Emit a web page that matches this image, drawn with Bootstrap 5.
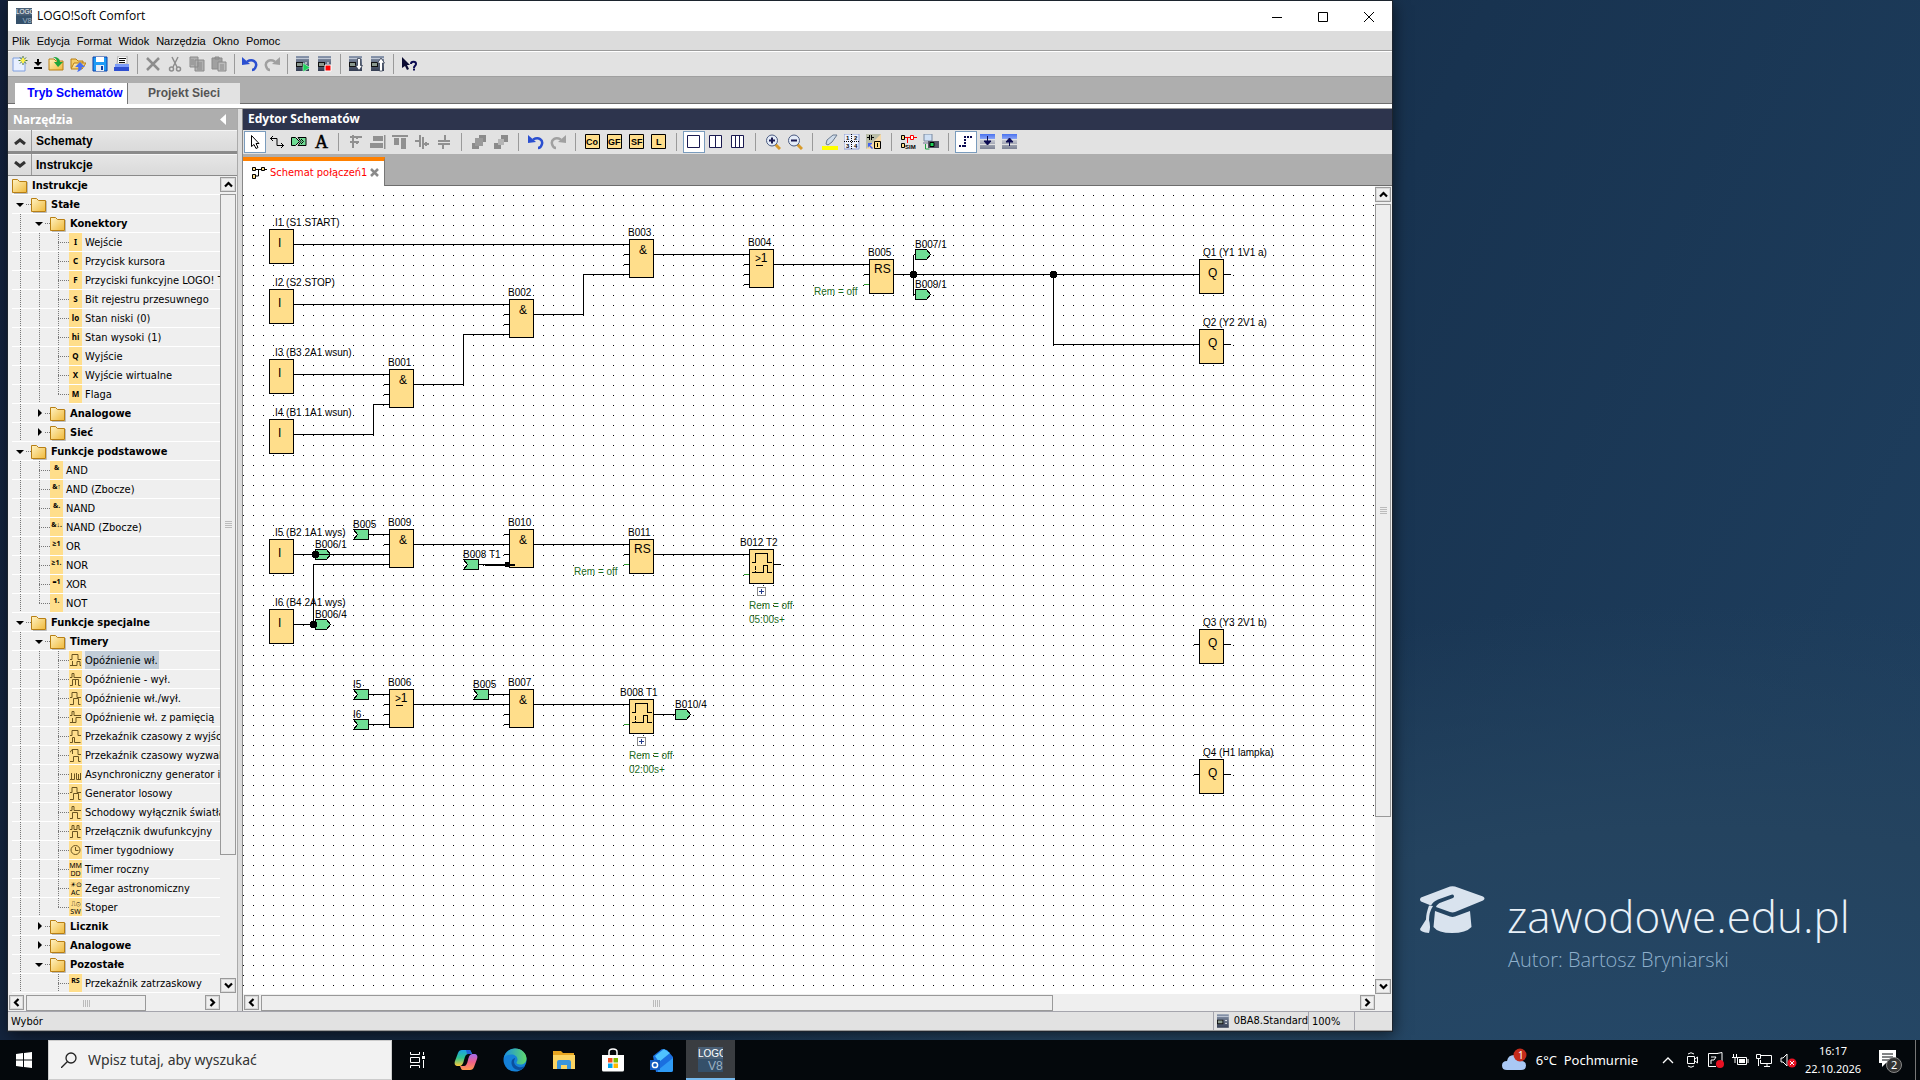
<!DOCTYPE html>
<html lang="pl">
<head>
<meta charset="utf-8">
<meta name="viewport" content="width=device-width, initial-scale=1">
<title>LOGO!Soft Comfort</title>
<link href="https://cdn.jsdelivr.net/npm/bootstrap@5.3.0/dist/css/bootstrap.min.css" rel="stylesheet">
<style>
:root{--ui:"DejaVu Sans Condensed","DejaVu Sans",sans-serif;--seg:"Noto Sans","Open Sans",sans-serif;--ari:"Liberation Sans",Arial,sans-serif}
body{font-family:var(--seg);font-size:11px;line-height:16px;color:#000;background:#1d3b59;overflow:hidden}
button{font:inherit;color:inherit}
.desktop{background:radial-gradient(ellipse 1100px 560px at 88% 112%,#25496a 0,#24435f 60%,transparent 100%),linear-gradient(115deg,#12203a 0,#14273f 35%,#183350 62%,#1f4060 100%)}
.app-win{width:calc(72.5% - 8px);margin:1px 0 9px 8px;background:#e2e2e2;box-shadow:0 0 0 1px #1c242e,2px 4px 14px rgba(0,0,0,.55)}
.title-bar{height:30px;background:#fff;padding-left:8px}
.title-bar h1{font:400 12px/16px "Open Sans","Noto Sans",sans-serif;margin:0 0 0 5px}
.win-btn{width:46px;height:30px;border:0;background:none;padding:0}
.menu-bar{height:21px;background:#dcdcdc;border-bottom:1px solid #fff;box-shadow:inset 0 -1px #9b9b9b;font-family:var(--ari);padding:2px 0 0 4px;gap:7px}
.menu-bar a{color:#000;text-decoration:none}
.tool-bar{height:25px;background:#e2e2e2;border-bottom:1px solid #a0a0a0;padding-left:1px}
.tb{width:22px;height:22px;padding:0;border:1px solid transparent;background:none;flex:none;display:flex;align-items:center;justify-content:center}
.tb.on{background:#fff;border-color:#7a9cbd}
.tb.thin{width:14px}
.tsep{width:9px;height:20px;flex:none;background:linear-gradient(#9a9a9a,#9a9a9a) center/1px 100% no-repeat}
.ed-tools .tsep{width:13px;height:18px}
.mode-bar{height:27px;background:#aeaeae;border-bottom:1px solid #6d6d6d;padding:6px 0 0 7px}
.mode-bar button{height:21px;border:0;padding:0 0 2px;font:bold 12px/18px var(--ari);width:112px;background:#e2e2e2;color:#555;text-align:center}
.mode-bar button.now{width:113px;background:#fff;color:#00f;border-right:1px solid #777;padding-left:8px}
.strip{height:5px;background:#fff;border-bottom:1px solid #999}
.side{width:229px;flex:none;background:#efefef}
.pane-head{height:21px;font:bold 12px/20px var(--seg);color:#fff;padding:0 5px;flex:none}
.side .pane-head{background:#aeaeae;padding-right:10px}
.acc{height:21px;border:0;background:linear-gradient(#e6e6e6,#dadada);font:bold 12px/22px var(--ari);padding:0;text-align:left;flex:none;box-shadow:inset 0 1px #f4f4f4}
.acc span.ch{width:24px;height:21px;border-right:1px solid #9a9a9a;display:flex;align-items:center;justify-content:center;margin-right:4px}
.acc.dark{height:24px;border-bottom:3px solid #8a8a8a}
.acc.line{border-bottom:1px solid #8a8a8a;height:22px}
.tree{margin:0 0 0 4px;padding:0;list-style:none;overflow:hidden;flex:1 1 0;min-width:0}
.tree li{display:flex;height:19px;border-bottom:1px solid #fff;line-height:20px;white-space:nowrap;overflow:hidden;font-family:var(--ui);font-size:11px}
.tree li.f{font-weight:700}
.tree i{width:19px;height:18px;flex:none;position:relative;font-style:normal}
.tree i.g{background:repeating-linear-gradient(#777 0 1px,transparent 1px 2px) 8px 0/1px 100% no-repeat}
.tree i.b,.tree i.e{background:repeating-linear-gradient(#777 0 1px,transparent 1px 2px) 8px 0/1px 100% no-repeat,repeating-linear-gradient(90deg,#777 0 1px,transparent 1px 2px) 8px 9px/11px 1px no-repeat}
.tree i.e{background-size:1px 9px,11px 1px}
.tree i.o,.tree i.c{background:repeating-linear-gradient(90deg,#777 0 1px,transparent 1px 2px) 14px 9px/5px 1px no-repeat}
.tree i.o::before{content:"";position:absolute;left:4px;top:8px;border:4px solid transparent;border-top-color:#000;border-bottom:0}
.tree i.c::before{content:"";position:absolute;left:7px;top:5px;border:4px solid transparent;border-left-color:#000;border-right:0}
.tree svg.fo{width:16px;height:16px;margin:2px 4px 0 0;flex:none}
.tree b{width:13px;height:18px;flex:none;background:#ffde8b;margin-right:3px;font:bold 8px/17px var(--seg);text-align:center;overflow:hidden}
.tree b.n{font-size:7px;line-height:13px}
.tree b.m{font:7px/8px var(--seg);padding-top:2px;white-space:normal}
.tree b svg{display:block;margin:3px 0 0 1px}
.tree mark{background:#c2cdd8;padding:0 1px 0 0;line-height:20px}
.sbv{width:17px;background:#efefef;flex:none;padding:1px 1px 0 0;gap:2px}
.sbh{height:17px;background:#efefef;flex:none;padding:1px 0 0 1px;gap:2px}
.sbtn{width:15px;height:15px;border:1px solid #999;background:#efefef;padding:0;flex:none;display:flex;align-items:center;justify-content:center;box-shadow:inset 0 0 0 1px #d9d9d9}
.sbv .sbtn{width:16px}
.thumb{border:1px solid #999;background:#eee;display:flex;align-items:center;justify-content:center}
.sbv .thumb{width:16px}
.sbh .thumb{height:16px}
.grip-h{width:7px;height:7px;background:repeating-linear-gradient(90deg,#bbb 0 1px,transparent 1px 2px)}
.grip-v{width:7px;height:7px;background:repeating-linear-gradient(#bbb 0 1px,transparent 1px 2px)}
.split{width:6px;background:#dcdcdc;border-left:1px solid #aaa;border-right:1px solid #888;flex:none}
.ed .pane-head{background:#2d344d}
.ed-tools{height:24px;background:#e2e2e2;padding-left:1px;flex:none}
.doc-bar{height:32px;background:#aeaeae;border-bottom:1px solid #6d6d6d;padding-top:3px;flex:none}
.doc-tab{height:29px;width:142px;background:#fff;border-top:4px solid #ff8000;border-right:1px solid #777;color:#f00;font-family:var(--ui);padding:0 0 2px 8px;gap:3px}
.doc-tab button{border:0;background:none;padding:0;line-height:0}
.canvas{background:#fff;min-width:0;flex:1 1 0}
.canvas text{font-family:var(--ari)}
.t10{font-size:10px}.t12{font-size:12px}
.status{height:20px;background:#e2e2e2;border-top:1px solid #a5a5ad;font-family:var(--ui);line-height:20px;flex:none;border-bottom:1px solid #999}
.status>div{border-left:1px solid #a5a5ad;padding-left:3px}
.st1{width:95px}.st2{width:46px}.st3{width:38px}
.brand{color:#e9f1f8;padding:0 0 66px 28px;gap:22px}
.brand h2{font:300 44px/52px "Open Sans","Noto Sans",sans-serif;margin:0}
.brand p{font:300 20px/28px "Open Sans","Noto Sans",sans-serif;margin:4px 0 0 1px;color:#8fb0cc}
.brand svg{margin-bottom:41px}
.task{height:40px;background:#04080c;color:#fff;flex:none}
.task button{border:0;background:none;padding:0;height:40px;width:49px;display:flex;align-items:center;justify-content:center;flex:none}
.task button.start{width:48px}
.find{width:344px;background:#f2f2f2;border:1px solid #ccc;gap:11px;padding-left:12px}
.find input{border:0;background:none;outline:0;font:14px/20px var(--seg);padding:0;width:280px}
.find input::placeholder{color:#333;opacity:1}
.task button.run{background:#3a3d41;border-bottom:2px solid #76b9ed}
.task .tray{width:24px}
.task .wea{width:auto;gap:8px;margin-right:18px;font-size:13px}
.clock{font-size:11px;line-height:18px;text-align:center;width:62px;margin:0 0 0 2px}
.task .note{width:52px;border-right:1px solid #777;margin-right:4px}
</style>
<script src="https://cdn.jsdelivr.net/npm/bootstrap@5.3.0/dist/js/bootstrap.bundle.min.js"></script>
</head>
<body class="vh-100 d-flex flex-column">
<svg width="0" height="0" class="position-absolute" aria-hidden="true">
<defs>
<linearGradient id="gfo" x1="0" y1="0" x2="1" y2="1"><stop offset="0" stop-color="#fff3c4"/><stop offset="1" stop-color="#f0b93a"/></linearGradient>
<linearGradient id="gdev" x1="0" y1="0" x2="0" y2="1"><stop offset="0" stop-color="#8a97ad"/><stop offset="1" stop-color="#343d52"/></linearGradient>
<linearGradient id="gbl" x1="0" y1="0" x2="0" y2="1"><stop offset="0" stop-color="#4a72f0"/><stop offset=".35" stop-color="#8fa8f5"/><stop offset=".4" stop-color="#c4c7d0"/><stop offset="1" stop-color="#7c8294"/></linearGradient>
<symbol id="fold" viewBox="0 0 16 16"><path d="M15.500 4v11.500H2" fill="none" stroke="#bbb"/><path d="M.5 14.500v-13h5l2 2h7v11z" fill="url(#gfo)" stroke="#b87f14"/></symbol>
<symbol id="dev" viewBox="0 0 14 16"><path d="M0 0h13v15H0z" fill="url(#gdev)"/><path d="M0 2.500h13" stroke="#c0c8d6"/><path d="M0 6h7v5H0z" fill="#111"/><path d="M1 7h5v3H1z" fill="#8b9a90"/><path d="M9 7h2M9 10h2" stroke="#fff"/></symbol>
<symbol id="un" viewBox="0 0 16 16"><path d="M5 5.500C11 2.500 15 6 14 10c-.5 2-2 4-4 4" fill="none" stroke="currentColor" stroke-width="2.500"/><path d="M0 1l8 7-8 1z" fill="currentColor"/></symbol>
<symbol id="logo" viewBox="0 0 25 25"><path d="M0 0h25v25H0z" fill="#4a5f75"/><path d="M0 12h25v13H0z" fill="#35506a"/><text x="0" y="10" font-size="10" fill="#fff" font-family="Liberation Sans, sans-serif">LOGO</text><text x="10" y="23" font-size="12" fill="#9db0c2" font-family="Liberation Sans, sans-serif">V8</text></symbol>
<symbol id="up" viewBox="0 0 9 7"><path d="M1 5.500l3.500-3.500L8 5.500" fill="none" stroke="#000" stroke-width="2.200"/></symbol>
<pattern id="dots" width="10" height="10" patternUnits="userSpaceOnUse"><path d="M0 9h1v1H0z"/></pattern>
<rect id="io" width="24" height="34" fill="#ffde8b" stroke="#000"/>
<rect id="gate" width="24" height="38" fill="#ffde8b" stroke="#000"/>
<path id="cout" d="M0 0h11l4 5-4 5H0z" fill="#6fdc94" stroke="#000"/>
<path id="cin" d="M0 0h15v10H0l4-5z" fill="#6fdc94" stroke="#000"/>
<path id="node" d="M-2-3h4l1 1v4l-1 1h-4l-1-1v-4z" fill="#000" stroke="#000"/>
<g id="tmr"><use href="#io"/><path d="M2 13h4V4h12v9h4M2 23h12v-7h4v7h4" fill="none" stroke="#000"/><path d="M6 16v7" stroke="#000" stroke-dasharray="4 1"/></g>
<g id="plus"><rect width="8" height="8" fill="#fff" stroke="#888"/><path d="M1.500 4h5M4 1.500v5" stroke="#223a8a"/></g>
</defs>
</svg>

<main class="desktop d-flex flex-fill" style="min-height:0">
<section class="app-win d-flex flex-column">
  <header class="title-bar d-flex align-items-center">
    <svg width="16" height="16"><use href="#logo"/></svg><h1 class="flex-fill">LOGO!Soft Comfort</h1>
    <button class="win-btn" aria-label="Minimalizuj"><svg width="11" height="11"><path d="M0 5.500h10" stroke="#000"/></svg></button>
    <button class="win-btn" aria-label="Maksymalizuj"><svg width="11" height="11"><path d="M.5.5h9v9h-9z" fill="none" stroke="#000"/></svg></button>
    <button class="win-btn" aria-label="Zamknij"><svg width="11" height="11"><path d="M0 0l10 10M10 0L0 10" stroke="#000"/></svg></button>
  </header>
  <nav class="menu-bar d-flex"><a href="#">Plik</a><a href="#">Edycja</a><a href="#">Format</a><a href="#">Widok</a><a href="#">Narzędzia</a><a href="#">Okno</a><a href="#">Pomoc</a></nav>
  <div class="tool-bar d-flex align-items-center">
    <button class="tb" aria-label="Nowy"><svg width="16" height="16"><path d="M1 2h9l3 3v10H1z" fill="#e8f0ff" stroke="#7f9fe0"/><path d="M11 0v9M6.500 4.500h9M8 1.500l6 6M14 1.500l-6 6" stroke="#3d6a2a"/><path d="M11 2v5M8.500 4.500h5" stroke="#fff34a" stroke-width="2"/></svg></button>
    <button class="tb thin" aria-label="Wybierz typ"><svg width="8" height="12"><path d="M3 1h2v3h3L4 8 0 4h3zM0 9h8v2H0z"/></svg></button>
    <button class="tb" aria-label="Otwórz"><svg width="16" height="16"><path d="M1 14V3h5l2 2h7v9z" fill="url(#gfo)" stroke="#b87f14"/><path d="M5 1c5 0 7 2 7 5h3l-5 5-4-5h3c0-2-1-4-4-5z" fill="#1ea53a"/></svg></button>
    <button class="tb" aria-label="Wczytaj"><svg width="16" height="16"><path d="M1 12V3h5l2 2h5v3" fill="#f5cd68" stroke="#b87f14"/><path d="M1 13l3-6h12l-4 6z" fill="url(#gfo)" stroke="#b87f14"/><path d="M10 6l5 5h-3c0 3-2 4-5 5 1-2 2-3 1-5H5z" fill="#4a70f0"/></svg></button>
    <button class="tb" aria-label="Zapisz"><svg width="16" height="16"><path d="M1 1h14v14H1z" fill="#1e9bf5" stroke="#0a3fa8"/><path d="M4 1h8v5H4z" fill="#fff"/><path d="M4 9h8v6H4z" fill="#e8eef5"/><path d="M9 10h2v4H9z" fill="#0a3fa8"/></svg></button>
    <button class="tb" aria-label="Drukuj"><svg width="16" height="16"><path d="M4 0h9v8H3z" fill="#fff" stroke="#aaa"/><path d="M5 2.500h7M5 4.500h6M5 6.500h6" stroke="#111"/><path d="M1 8h14v4H1z" fill="#7b9bf8"/><path d="M0 11h15v4H0z" fill="#2f4fd0"/></svg></button>
    <span class="tsep"></span>
    <button class="tb" aria-label="Usuń"><svg width="16" height="16" stroke="#8d8d8d" stroke-width="2.500"><path d="M2 2l12 12M14 2L2 14"/></svg></button>
    <button class="tb" aria-label="Wytnij"><svg width="16" height="16" fill="none" stroke="#8d8d8d" stroke-width="1.500"><path d="M5 1l5 10M11 1L6 11"/><circle cx="4.500" cy="13" r="2"/><circle cx="11.500" cy="13" r="2"/></svg></button>
    <button class="tb" aria-label="Kopiuj"><svg width="16" height="16" fill="#b0b0b0" stroke="#8a8a8a"><path d="M1 1h8v10H1zM6 4h9v11H6z"/><path d="M8 7h5M8 9h5M8 11h5M8 13h5M2 4h3M2 6h3M2 8h3"/></svg></button>
    <button class="tb" aria-label="Wklej"><svg width="16" height="16" fill="#a0a0a0" stroke="#8a8a8a"><path d="M1 2h10v11H1z"/><path d="M4 1h4v2H4z"/><path fill="#bbb" d="M7 6h8v9H7z"/><path d="M9 9h4M9 11h4M9 13h4"/></svg></button>
    <span class="tsep"></span>
    <button class="tb" aria-label="Cofnij" style="color:#2b4fd0"><svg width="16" height="16"><use href="#un"/></svg></button>
    <button class="tb" aria-label="Ponów" style="color:#a0a0a0"><svg width="16" height="16"><use href="#un" transform="matrix(-1 0 0 1 16 0)"/></svg></button>
    <span class="tsep"></span>
    <button class="tb" aria-label="Start LOGO!"><svg width="14" height="16"><use href="#dev"/><path d="M7 7l7 4.500L7 16z" fill="#1ed05a" stroke="#fff" stroke-width=".5"/></svg></button>
    <button class="tb" aria-label="Stop LOGO!"><svg width="14" height="16"><use href="#dev"/><path d="M7 9h6v6H7z" fill="#f00" stroke="#fff"/></svg></button>
    <span class="tsep"></span>
    <button class="tb" aria-label="PC do LOGO!"><svg width="14" height="16"><use href="#dev"/><path d="M8.500 2.500h3v7h2l-3.500 5-3.500-5h2z" fill="#fff" stroke="#343d52" stroke-width=".8"/></svg></button>
    <button class="tb" aria-label="LOGO! do PC"><svg width="14" height="16"><use href="#dev"/><path d="M8.500 15h3V7h2L10 2 6.500 7h2z" fill="#fff" stroke="#343d52" stroke-width=".8"/></svg></button>
    <span class="tsep"></span>
    <button class="tb" aria-label="Pomoc kontekstowa"><svg width="16" height="16"><path d="M1 1v11l3-2 2 4 2-1-2-4h3z" fill="#0a0a30"/><path d="M10 8c0-3 5-3 5 0 0 2-2 1.500-2 4M12 13.500h2" fill="none" stroke="#0a0a50" stroke-width="2"/></svg></button>
  </div>
  <div class="mode-bar d-flex"><button class="now">Tryb Schematów</button><button>Projekt Sieci</button></div>
  <div class="strip"></div>
  <div class="d-flex flex-fill" style="min-height:0">
    <aside class="side d-flex flex-column">
      <div class="pane-head d-flex justify-content-between align-items-center"><span>Narzędzia</span><svg width="7" height="11"><path d="M6 0v11L0 5.500z" fill="#fff"/></svg></div>
      <button class="acc dark d-flex"><span class="ch"><svg width="12" height="8"><path d="M1 7l5-4 5 4" fill="none" stroke="#333" stroke-width="3"/></svg></span>Schematy</button>
      <button class="acc line d-flex"><span class="ch"><svg width="12" height="8"><path d="M1 1l5 4 5-4" fill="none" stroke="#333" stroke-width="3"/></svg></span>Instrukcje</button>
      <div class="d-flex flex-fill" style="min-height:0">
        <ul class="tree">
<li class="f"><svg class="fo"><use href="#fold"/></svg>Instrukcje</li>
<li class="f"><i class="o"></i><svg class="fo"><use href="#fold"/></svg>Stałe</li>
<li class="f"><i class="g"></i><i class="o"></i><svg class="fo"><use href="#fold"/></svg>Konektory</li>
<li><i class="g"></i><i class="g"></i><i class="b"></i><b>I</b>Wejście</li>
<li><i class="g"></i><i class="g"></i><i class="b"></i><b>C</b>Przycisk kursora</li>
<li><i class="g"></i><i class="g"></i><i class="b"></i><b>F</b>Przyciski funkcyjne LOGO! TD</li>
<li><i class="g"></i><i class="g"></i><i class="b"></i><b>S</b>Bit rejestru przesuwnego</li>
<li><i class="g"></i><i class="g"></i><i class="b"></i><b>lo</b>Stan niski (0)</li>
<li><i class="g"></i><i class="g"></i><i class="b"></i><b>hi</b>Stan wysoki (1)</li>
<li><i class="g"></i><i class="g"></i><i class="b"></i><b>Q</b>Wyjście</li>
<li><i class="g"></i><i class="g"></i><i class="b"></i><b>X</b>Wyjście wirtualne</li>
<li><i class="g"></i><i class="g"></i><i class="e"></i><b>M</b>Flaga</li>
<li class="f"><i class="g"></i><i class="c"></i><svg class="fo"><use href="#fold"/></svg>Analogowe</li>
<li class="f"><i class="g"></i><i class="c"></i><svg class="fo"><use href="#fold"/></svg>Sieć</li>
<li class="f"><i class="o"></i><svg class="fo"><use href="#fold"/></svg>Funkcje podstawowe</li>
<li><i class="g"></i><i class="b"></i><b class="n">&amp;</b>AND</li>
<li><i class="g"></i><i class="b"></i><b class="n">&amp;↑</b>AND (Zbocze)</li>
<li><i class="g"></i><i class="b"></i><b class="n">&amp;.</b>NAND</li>
<li><i class="g"></i><i class="b"></i><b class="n">&amp;↓.</b>NAND (Zbocze)</li>
<li><i class="g"></i><i class="b"></i><b class="n">≥1</b>OR</li>
<li><i class="g"></i><i class="b"></i><b class="n">≥1.</b>NOR</li>
<li><i class="g"></i><i class="b"></i><b class="n">=1</b>XOR</li>
<li><i class="g"></i><i class="e"></i><b class="n">1.</b>NOT</li>
<li class="f"><i class="o"></i><svg class="fo"><use href="#fold"/></svg>Funkcje specjalne</li>
<li class="f"><i class="g"></i><i class="o"></i><svg class="fo"><use href="#fold"/></svg>Timery</li>
<li><i class="g"></i><i class="g"></i><i class="b"></i><b><svg width="12" height="13" fill="none" stroke="#6b5420"><path d="M0 5.500h2v-5h6v5h3M2.500 7v5M0 11.500h7v-4h3v4h1"/></svg></b><mark>Opóźnienie wł.</mark></li>
<li><i class="g"></i><i class="g"></i><i class="b"></i><b><svg width="12" height="13" fill="none" stroke="#6b5420"><path d="M0 4.500h2v-4h2v4h7M0 12.500h2.500v-6h6v6h2M5.500 6v6"/></svg></b>Opóźnienie - wył.</li>
<li><i class="g"></i><i class="g"></i><i class="b"></i><b><svg width="12" height="13" fill="none" stroke="#6b5420"><path d="M0 5.500h2v-5h5v5h4M0 12.500h3.500v-6h5v6h2"/></svg></b>Opóźnienie wł./wył.</li>
<li><i class="g"></i><i class="g"></i><i class="b"></i><b><svg width="12" height="13" fill="none" stroke="#6b5420"><path d="M0 4.500h2v-4h2v4h7M0 11.500h6v-5h5M2.500 7v4"/></svg></b>Opóźnienie wł. z pamięcią</li>
<li><i class="g"></i><i class="g"></i><i class="b"></i><b><svg width="12" height="13" fill="none" stroke="#6b5420"><path d="M0 5.500h2v-5h6v5h3M0 12.500h2.500v-5h2v5h6"/></svg></b>Przekaźnik czasowy z wyjściem</li>
<li><i class="g"></i><i class="g"></i><i class="b"></i><b><svg width="12" height="13" fill="none" stroke="#6b5420"><path d="M0 3.500l2-3h6v5h3M2.500 1v4M0 12.500h3.500v-5h5v5h2"/></svg></b>Przekaźnik czasowy wyzwalany</li>
<li><i class="g"></i><i class="g"></i><i class="b"></i><b><svg width="12" height="13" fill="none" stroke="#6b5420"><path d="M1.500 5v7M0 11.500h4.500v-6M6.500 5v6.500h4M8.500 6v6M10.500 5v7"/></svg></b>Asynchroniczny generator imp.</li>
<li><i class="g"></i><i class="g"></i><i class="b"></i><b><svg width="12" height="13" fill="none" stroke="#6b5420"><path d="M0 5.500h2v-5h5v5h4M0 12.500h3.500v-6h5v6h2"/></svg></b>Generator losowy</li>
<li><i class="g"></i><i class="g"></i><i class="b"></i><b><svg width="12" height="13" fill="none" stroke="#6b5420"><path d="M0 4.500h2v-4h2v4h7M0 12.500h2.500v-6h5v6h3"/></svg></b>Schodowy wyłącznik światła</li>
<li><i class="g"></i><i class="g"></i><i class="b"></i><b><svg width="12" height="13" fill="none" stroke="#6b5420"><path d="M0 4.500h2v-4h2v4h3v-4h2v4h2M0 12.500h2.500v-6h5v6h3"/></svg></b>Przełącznik dwufunkcyjny</li>
<li><i class="g"></i><i class="g"></i><i class="b"></i><b><svg width="12" height="13" fill="none" stroke="#6b5420"><circle cx="5.500" cy="6" r="4.500"/><path d="M5.500 3v3.500h3"/></svg></b>Timer tygodniowy</li>
<li><i class="g"></i><i class="g"></i><i class="b"></i><b class="m">MM DD</b>Timer roczny</li>
<li><i class="g"></i><i class="g"></i><i class="b"></i><b class="m">☀⊙ AC</b>Zegar astronomiczny</li>
<li><i class="g"></i><i class="g"></i><i class="e"></i><b class="m">⎍⊙ SW</b>Stoper</li>
<li class="f"><i class="g"></i><i class="c"></i><svg class="fo"><use href="#fold"/></svg>Licznik</li>
<li class="f"><i class="g"></i><i class="c"></i><svg class="fo"><use href="#fold"/></svg>Analogowe</li>
<li class="f"><i class="g"></i><i class="o"></i><svg class="fo"><use href="#fold"/></svg>Pozostałe</li>
<li><i class="g"></i><i></i><i class="b"></i><b class="n">RS</b>Przekaźnik zatrzaskowy</li>
        </ul>
        <div class="sbv d-flex flex-column" style="margin-bottom:1px">
          <button class="sbtn" aria-label="W górę"><svg width="9" height="7"><use href="#up"/></svg></button>
          <div class="thumb" style="height:81%"><span class="grip-v"></span></div>
          <button class="sbtn mt-auto" aria-label="W dół"><svg width="9" height="7"><use href="#up" transform="matrix(1 0 0 -1 0 7)"/></svg></button>
        </div>
      </div>
      <div class="sbh d-flex" style="margin-right:17px">
        <button class="sbtn" aria-label="W lewo"><svg width="7" height="9"><path d="M5.500 1L2 4.500 5.500 8" fill="none" stroke="#000" stroke-width="2.200"/></svg></button>
        <div class="thumb" style="width:120px"><span class="grip-h"></span></div>
        <button class="sbtn ms-auto" aria-label="W prawo"><svg width="7" height="9"><path d="M1.500 1L5 4.500 1.500 8" fill="none" stroke="#000" stroke-width="2.200"/></svg></button>
      </div>
    </aside>
    <div class="split"></div>
    <section class="ed d-flex flex-column flex-fill" style="min-width:0">
      <div class="pane-head">Edytor Schematów</div>
      <div class="ed-tools d-flex align-items-center">
        <button class="tb on" aria-label="Wybór"><svg width="16" height="16"><path d="M4.500 1.500v11l2.500-2 2 4 2-1-2-4h3z" fill="#fff" stroke="#000"/></svg></button>
        <button class="tb" aria-label="Połączenie"><svg width="16" height="16" fill="none" stroke="#000"><path d="M1 4.500h7v7h7M4 2L1.500 4.500 4 7M12 9l2.500 2.500L12 14"/></svg></button>
        <button class="tb" aria-label="Rozłącz"><svg width="16" height="16" fill="#6fdc94" stroke="#000"><path d="M.5 3.500h4l4 4-4 4h-4zM7 3.500h8v8H7l3-4z"/><path d="M10 5l2.500 2.500L10 10" fill="none"/></svg></button>
        <button class="tb" aria-label="Tekst"><svg width="16" height="16"><text x="2" y="14" font-family="Liberation Serif, serif" font-size="18" stroke="#000" stroke-width=".5">A</text></svg></button>
        <span class="tsep"></span>
        <button class="tb" aria-label="Wyrównaj"><svg width="16" height="16" stroke="#909090" stroke-width="2"><path d="M2 3h12M2 8h9M5 1v13M9 3v2M9 8v2"/></svg></button>
        <button class="tb" aria-label="Wyrównaj w prawo"><svg width="16" height="16" fill="#909090"><path d="M14 1h1.500v14H14zM3 2h10v5H3zM0 9h13v5H0z"/></svg></button>
        <button class="tb" aria-label="Wyrównaj do góry"><svg width="16" height="16" fill="#909090"><path d="M0 1h16v2H0zM2 4h5v7H2zM9 4h5v11H9z"/></svg></button>
        <button class="tb" aria-label="Rozmieść poziomo"><svg width="16" height="16" stroke="#909090" stroke-width="2"><path d="M1 7h5M6 1v12M9 3v12M10 10h5M12 8v4"/></svg></button>
        <button class="tb" aria-label="Rozmieść pionowo"><svg width="16" height="16" stroke="#909090" stroke-width="2"><path d="M2 7h12M2 10h12M9 1v6M7 10v5"/></svg></button>
        <span class="tsep"></span>
        <button class="tb" aria-label="Na wierzch"><svg width="16" height="16" fill="#8b8b8b"><path d="M8 1h7v7H8zM1 9h7v6H1z"/><path d="M4 4h8v8H4z" fill="#9a9a9a"/></svg></button>
        <button class="tb" aria-label="Na spód"><svg width="16" height="16" fill="#8b8b8b"><path d="M8 1h7v7H8zM1 9h7v6H1z"/><path d="M5 5h6v6H5z" fill="#b5b5b5"/></svg></button>
        <span class="tsep"></span>
        <button class="tb" aria-label="Cofnij" style="color:#2b4fd0"><svg width="16" height="16"><use href="#un"/></svg></button>
        <button class="tb" aria-label="Ponów" style="color:#a0a0a0"><svg width="16" height="16"><use href="#un" transform="matrix(-1 0 0 1 16 0)"/></svg></button>
        <span class="tsep"></span>
        <button class="tb"><svg width="16" height="16"><path d="M.5.500h14v14H.5z" fill="#ffde8b" stroke="#000"/><text x="1" y="11" font-size="9" font-weight="700" font-family="Liberation Sans, sans-serif">Co</text></svg></button>
        <button class="tb"><svg width="16" height="16"><path d="M.5.500h14v14H.5z" fill="#ffde8b" stroke="#000"/><text x="1" y="11" font-size="9" font-weight="700" font-family="Liberation Sans, sans-serif">GF</text></svg></button>
        <button class="tb"><svg width="16" height="16"><path d="M.5.500h14v14H.5z" fill="#ffde8b" stroke="#000"/><text x="2" y="11" font-size="9" font-weight="700" font-family="Liberation Sans, sans-serif">SF</text></svg></button>
        <button class="tb"><svg width="16" height="16"><path d="M.5.500h14v14H.5z" fill="#ffde8b" stroke="#000"/><text x="5" y="11" font-size="9" font-weight="700" font-family="Liberation Sans, sans-serif">L</text></svg></button>
        <span class="tsep"></span>
        <button class="tb on" aria-label="Jedno okno"><svg width="14" height="14"><path d="M.5.5h12v12H.5z" fill="#fff" stroke="#1a1a50"/></svg></button>
        <button class="tb" aria-label="Dwa okna"><svg width="14" height="14"><path d="M.5.5h12v12H.5zM6.500 0v12" fill="#fff" stroke="#1a1a50"/></svg></button>
        <button class="tb" aria-label="Trzy okna"><svg width="14" height="14"><path d="M.5.5h12v12H.5zM4.500 0v12M8.500 0v12" fill="#fff" stroke="#1a1a50"/></svg></button>
        <span class="tsep"></span>
        <button class="tb" aria-label="Powiększ"><svg width="16" height="16"><path d="M10 10l5 5" stroke="#d79a2a" stroke-width="3"/><circle cx="7" cy="6.500" r="5.500" fill="#e4ecf8" stroke="#4a5a80"/><path d="M4 6.500h6M7 3.500v6" stroke="#1a1a50" stroke-width="2"/></svg></button>
        <button class="tb" aria-label="Pomniejsz"><svg width="16" height="16"><path d="M10 10l5 5" stroke="#d79a2a" stroke-width="3"/><circle cx="7" cy="6.500" r="5.500" fill="#e4ecf8" stroke="#4a5a80"/><path d="M4 6.500h6" stroke="#1a1a50" stroke-width="2"/></svg></button>
        <span class="tsep"></span>
        <button class="tb" aria-label="Zaznacz linie"><svg width="16" height="16"><path d="M0 12h16v4H0z" fill="#ff0"/><path d="M4 10l1-4 6-5h4l-5 7-4 3z" fill="#cfdcea" stroke="#6a7a90"/></svg></button>
        <button class="tb" aria-label="Podział stron"><svg width="16" height="16"><path d="M0 0h15v15H0z" fill="#eef3ff" stroke="#8a9ad0"/><path d="M7.500 0v15M0 7.500h15" stroke="#000" stroke-dasharray="1 1"/><g font-size="6" font-weight="700" font-family="Liberation Sans, sans-serif"><text x="2" y="6">1</text><text x="10" y="6">2</text><text x="2" y="14">3</text><text x="10" y="14">4</text></g></svg></button>
        <button class="tb" aria-label="Konwersja na LAD"><svg width="16" height="16"><path d="M0 0h15v15H0z" fill="#f5d9a8"/><path d="M0 0h15L0 15z" fill="#b9bda8"/><path d="M1 3.500h2M3.500 1v5M5.500 1v5M6 3.500h2" stroke="#000"/><path d="M8.500 7.500h6v7h-6z" fill="#ffde8b" stroke="#000"/><path d="M11.500 9v4" stroke="#000"/><path d="M2 9h4v1l-2 1 3 3-1 1-3-3-1 2z" fill="#4060f0"/></svg></button>
        <span class="tsep"></span>
        <button class="tb" aria-label="Symulacja"><svg width="16" height="16"><path d="M.5 1.500h3v4h-3zM.5 9.500h3v4h-3z" fill="#ffde8b" stroke="#000"/><path d="M9.500 1.500h3v4h-3z" fill="#fff" stroke="#f00"/><path d="M4 3.500h5M6.500 4v5M13 3.500h3" stroke="#f00"/><text x="4" y="15" font-size="6" font-weight="700" font-family="Liberation Sans, sans-serif">SIM</text></svg></button>
        <button class="tb" aria-label="Test online"><svg width="16" height="16"><path d="M1 0h8v7H1z" fill="#cfe0f5" stroke="#7a8aa0"/><path d="M0 8h10v2H0z" fill="#aab"/><path d="M5 7h11v7H5z" fill="#556"/><path d="M7 8.500h4v4H7z" fill="#1ed05a" stroke="#000"/><path d="M2.500 10v5h4" fill="none" stroke="#1aa040"/></svg></button>
        <span class="tsep"></span>
        <button class="tb on" aria-label="Łamanie linii"><svg width="16" height="16"><path d="M1 12h6M7 13V3M6 3h9" fill="none" stroke="#0a0a50" stroke-width="2" stroke-dasharray="2 1"/></svg></button>
        <button class="tb" aria-label="Zwiń"><svg width="16" height="16"><path d="M0 0h15v15H0z" fill="url(#gbl)"/><path d="M0 5.500h15M0 10.500h15" stroke="#e2e2e2"/><path d="M7.500 2v8M4 7h7l-3.500 4z" fill="#0a0a50" stroke="#0a0a50"/></svg></button>
        <button class="tb" aria-label="Rozwiń"><svg width="16" height="16"><path d="M0 0h15v15H0z" fill="url(#gbl)"/><path d="M0 5.500h15M0 10.500h15" stroke="#e2e2e2"/><path d="M7.500 12V5M4 8h7L7.500 4z" fill="#0a0a50" stroke="#0a0a50"/></svg></button>
      </div>
      <div class="doc-bar"><div class="doc-tab d-flex align-items-center"><svg width="16" height="14"><path d="M1.500 1.500h3v3h-3zM1.500 8.500h3v4h-3zM10.500 1.500h3v3h-3z" fill="#ffde8b" stroke="#000"/><path d="M5 3.500h5M7.500 4v6H5M14 3.500h2" fill="none" stroke="#000"/></svg><span>Schemat połączeń1</span><button aria-label="Zamknij schemat"><svg width="9" height="9"><path d="M1 1l7 7M8 1L1 8" stroke="#8a8a8a" stroke-width="2.500"/></svg></button></div></div>
      <div class="d-flex flex-fill" style="min-height:0">
        <svg class="canvas" height="100%">
          <rect width="100%" height="100%" fill="url(#dots)"/>
          <g transform="translate(-242.500 -185.500)" fill="none" stroke="#000" shape-rendering="crispEdges">
            <path d="M293 244H629M293 304H509M293 374H389M293 434H373V404H389M413 384H463V334H509M533 314H583V274H629M653 254H749M773 264H869M893 274H1199M913 254V294M913 254h3M913 294h3M1053 274V344H1199"/>
            <path d="M383 384h6M383 394h6M503 314h6M503 324h6M623 254h6M623 264h6M743 264h6M743 274h6M743 284h6M863 274h6"/>
            <path d="M1223 274h7M1223 344h7M1193 644h6M1223 644h7M1193 774h6M1223 774h7"/>
            <path d="M293 554H389M293 624H313V564H389M368 534H389M383 544h6M413 544H509M503 534h6M503 554h6M478 564H510M533 544H629M623 554h6M653 554H749M773 564h7"/>
            <path d="M368 694H389M368 724H389M383 704h6M383 714h6M413 704H509M488 694h21M503 714h6M503 724h6M533 704H629M653 714H675"/>
            <path d="M863 284h6M623 564h6M743 574h6M623 724h6" stroke="#2a9a2a"/>
            <use href="#io" x="269" y="229"/><use href="#io" x="269" y="289"/><use href="#io" x="269" y="359"/><use href="#io" x="269" y="419"/><use href="#io" x="269" y="539"/><use href="#io" x="269" y="609"/>
            <use href="#io" x="869" y="259"/><use href="#io" x="629" y="539"/>
            <use href="#io" x="1199" y="259"/><use href="#io" x="1199" y="329"/><use href="#io" x="1199" y="629"/><use href="#io" x="1199" y="759"/>
            <use href="#gate" x="389" y="369"/><use href="#gate" x="509" y="299"/><use href="#gate" x="629" y="239"/><use href="#gate" x="749" y="249"/><use href="#gate" x="389" y="529"/><use href="#gate" x="509" y="529"/><use href="#gate" x="389" y="689"/><use href="#gate" x="509" y="689"/>
            <use href="#tmr" x="749" y="549"/><use href="#tmr" x="629" y="699"/><use href="#plus" x="757" y="587"/><use href="#plus" x="637" y="737"/>
            <use href="#cout" x="915" y="249"/><use href="#cout" x="915" y="289"/><use href="#cout" x="315" y="549"/><use href="#cout" x="315" y="619"/><use href="#cout" x="675" y="709"/>
            <use href="#cin" x="353" y="529"/><use href="#cin" x="463" y="559"/><use href="#cin" x="353" y="689"/><use href="#cin" x="353" y="719"/><use href="#cin" x="473" y="689"/>
            <path d="M315 554h15M755 265h7M395 705h7"/><path d="M484 564H514" stroke-width="2"/>
            <use href="#node" x="913" y="274"/><use href="#node" x="1053" y="274"/><use href="#node" x="315" y="554"/><use href="#node" x="313" y="624"/><path d="M505 562h4v4h-4z" fill="#000"/>
          </g>
          <g transform="translate(-243 -186)">
            <g class="t12">
              <text x="278" y="247">I</text><text x="278" y="307">I</text><text x="278" y="377">I</text><text x="278" y="437">I</text><text x="278" y="557">I</text><text x="278" y="627">I</text>
              <text x="399" y="384">&amp;</text><text x="519" y="314">&amp;</text><text x="639" y="254">&amp;</text><text x="399" y="544">&amp;</text><text x="519" y="544">&amp;</text><text x="519" y="704">&amp;</text>
              <text x="755" y="262"><tspan font-size="10">&gt;</tspan>1</text><text x="395" y="702"><tspan font-size="10">&gt;</tspan>1</text>
              <text x="874" y="273">RS</text><text x="634" y="553">RS</text>
              <text x="1208" y="277">Q</text><text x="1208" y="347">Q</text><text x="1208" y="647">Q</text><text x="1208" y="777">Q</text>
            </g>
            <g class="t10">
              <text x="275" y="226">I1 (S1 START)</text><text x="275" y="286">I2 (S2 STOP)</text><text x="275" y="356">I3 (B3 2A1 wsun)</text><text x="275" y="416">I4 (B1 1A1 wsun)</text><text x="275" y="536">I5 (B2 1A1 wys)</text><text x="275" y="606">I6 (B4 2A1 wys)</text>
              <text x="388" y="366">B001</text><text x="508" y="296">B002</text><text x="628" y="236">B003</text><text x="748" y="246">B004</text><text x="868" y="256">B005</text><text x="388" y="526">B009</text><text x="508" y="526">B010</text><text x="628" y="536">B011</text><text x="740" y="546">B012 T2</text><text x="388" y="686">B006</text><text x="508" y="686">B007</text><text x="620" y="696">B008 T1</text>
              <text x="915" y="248">B007/1</text><text x="915" y="288">B009/1</text><text x="315" y="548">B006/1</text><text x="315" y="618">B006/4</text><text x="675" y="708">B010/4</text>
              <text x="353" y="528">B005</text><text x="463" y="558">B008 T1</text><text x="353" y="688">I5</text><text x="353" y="718">I6</text><text x="473" y="688">B005</text>
              <text x="1203" y="256">Q1 (Y1 1V1 a)</text><text x="1203" y="326">Q2 (Y2 2V1 a)</text><text x="1203" y="626">Q3 (Y3 2V1 b)</text><text x="1203" y="756">Q4 (H1 lampka)</text>
              <g fill="#1c6b1c"><text x="814" y="295">Rem = off</text><text x="574" y="575">Rem = off</text><text x="749" y="609">Rem = off</text><text x="749" y="623">05:00s+</text><text x="629" y="759">Rem = off</text><text x="629" y="773">02:00s+</text></g>
            </g>
          </g>
        </svg>
        <div class="sbv d-flex flex-column">
          <button class="sbtn" aria-label="W górę"><svg width="9" height="7"><use href="#up"/></svg></button>
          <div class="thumb" style="height:76%"><span class="grip-v"></span></div>
          <button class="sbtn mt-auto" aria-label="W dół"><svg width="9" height="7"><use href="#up" transform="matrix(1 0 0 -1 0 7)"/></svg></button>
        </div>
      </div>
      <div class="sbh d-flex" style="padding-right:17px">
        <button class="sbtn" aria-label="W lewo"><svg width="7" height="9"><path d="M5.500 1L2 4.500 5.500 8" fill="none" stroke="#000" stroke-width="2.200"/></svg></button>
        <div class="thumb" style="width:70%"><span class="grip-h"></span></div>
        <button class="sbtn ms-auto" aria-label="W prawo"><svg width="7" height="9"><path d="M1.500 1L5 4.500 1.500 8" fill="none" stroke="#000" stroke-width="2.200"/></svg></button>
      </div>
    </section>
  </div>
  <footer class="status d-flex"><span class="flex-fill" style="padding-left:3px">Wybór</span><div class="st1 d-flex align-items-center gap-1"><svg width="13" height="15"><use href="#dev"/></svg>0BA8.Standard</div><div class="st2">100%</div><div class="st3"></div></footer>
</section>
<section class="brand d-flex align-items-end">
  <svg width="65" height="47" viewBox="0 0 65 47" fill="#d9e3ee"><path d="M30 .6q2.500-.8 5 0l28 10q3 1.700 0 4L35 26q-2.500.8-5 0L16 21q1-3 5-4.500l12-4.500q1.500-1 .8-2.500t-2.500-.8L18 13.500q-5 2-7 6L1 15.500q-2-2 0-4z"/><path d="M9 19.500q-3 8-3 14L0 43q0 3 9 4 2-6 0-13 0-8 4-14z"/><path d="M15 25l15 5.500q2.500.8 5 0L50 25l1.500 16Q46 47 32 47T13.500 41z"/></svg>
  <div><h2>zawodowe.edu.pl</h2><p>Autor: Bartosz Bryniarski</p></div>
</section>
</main>

<footer class="task d-flex align-items-center">
  <button class="start" aria-label="Start"><svg width="16" height="16" fill="#fff"><path d="M0 2l7-1v6.500H0zM8 1l8-1v7.500H8zM0 8.500h7V15l-7-1zM8 8.500h8V16l-8-1z"/></svg></button>
  <label class="find d-flex align-items-center h-100"><svg width="16" height="16" fill="none" stroke="#222" stroke-width="1.300"><circle cx="10" cy="6" r="5"/><path d="M6.500 9.500L0 16"/></svg><input type="text" placeholder="Wpisz tutaj, aby wyszukać" aria-label="Wpisz tutaj, aby wyszukać"></label>
  <button aria-label="Widok zadań"><svg width="16" height="16" fill="none" stroke="#fff"><path d="M1.500 0v2.500h9V0M1.500 16v-2.500h9V16M1.500 5.500h9v5h-9zM14.500 0v3M14.500 8v8"/><path d="M13 4h3v3h-3z" fill="#fff" stroke="none"/></svg></button>
  <button aria-label="Copilot"><svg width="24" height="24"><defs><linearGradient id="c1" x1="0" y1="0" x2="0" y2="1"><stop offset="0" stop-color="#1aa0e8"/><stop offset=".5" stop-color="#2fc48d"/><stop offset="1" stop-color="#ffc83a"/></linearGradient><linearGradient id="c2" x1="0" y1="0" x2="0" y2="1"><stop offset="0" stop-color="#a06bf0"/><stop offset=".5" stop-color="#f0608a"/><stop offset="1" stop-color="#ff9a50"/></linearGradient></defs><path d="M8 2h7c2 0 2 2 3 4h-4c-2 0-3 2-4 6s-2 6-5 6H4c-3 0-4-2-3-5l3-8c.7-2 2-3 4-3z" fill="url(#c1)"/><path d="M16 22H9c-2 0-2-2-3-4h4c2 0 3-2 4-6s2-6 5-6h1c3 0 4 2 3 5l-3 8c-.7 2-2 3-4 3z" fill="url(#c2)"/><path d="M12 2h3c2 0 2 2 3 4h-5z" fill="#2060d8"/></svg></button>
  <button aria-label="Edge"><svg width="24" height="24"><defs><linearGradient id="e1"><stop offset="0" stop-color="#1b8fe0"/><stop offset="1" stop-color="#5fd96a"/></linearGradient></defs><circle cx="12" cy="12" r="11.500" fill="#1480d8"/><path d="M1 10C2 4 7 .5 12 .5c7 0 11.500 5 11.500 10 0 4-3 6-6 6-3 0-4-1-4-2s1-1 1-3c0-3-3-5-6-5-4 0-6.500 2-7.500 3.500z" fill="url(#e1)"/><path d="M9 12c-2 5 2 10 7 10 3 0 5-2 6-4-3 2-10 2-11-4 0-2 1-3 1-4-1 0-2 1-3 2z" fill="#0b4f9e"/></svg></button>
  <button aria-label="Eksplorator plików"><svg width="24" height="24"><path d="M1 3h8l2 2h11v16H1z" fill="#e8a520"/><path d="M1 7h22v14H1z" fill="#fcd462"/><path d="M5 21v-7q0-2 2-2h10q2 0 2 2v7h-4v-4H9v4z" fill="#3a94dc"/></svg></button>
  <button aria-label="Sklep"><svg width="24" height="24"><path d="M8 7V4q0-3 4-3t4 3v3" fill="none" stroke="#fff" stroke-width="1.500"/><path d="M1 7h22v15q0 1.500-1.500 1.500h-19Q1 23.500 1 22z" fill="#fff"/><path d="M7 10h4.500v4.500H7z" fill="#f25022"/><path d="M12.500 10H17v4.500h-4.500z" fill="#7fba00"/><path d="M7 15.500h4.500V20H7z" fill="#00a4ef"/><path d="M12.500 15.500H17V20h-4.500z" fill="#ffb900"/></svg></button>
  <button aria-label="Outlook"><svg width="24" height="24"><path d="M3 8L12 1l5 1 6 7v13q0 2-2 2H6z" fill="#1a6fe0"/><path d="M5 8l9-7 6 4L9 14z" fill="#4fc3ff"/><path d="M8 22l15-12v12q0 2-2 2H8z" fill="#2f9bf5"/><path d="M0 12h10v10H0z" fill="#1059c0"/><circle cx="5" cy="17" r="2.600" fill="none" stroke="#fff" stroke-width="1.500"/></svg></button>
  <button class="run" aria-label="LOGO!Soft Comfort"><svg width="25" height="25"><use href="#logo"/></svg></button>
  <span class="flex-fill"></span>
  <button class="wea"><svg width="26" height="24"><path d="M5 22q-5 0-5-4.500T5 13q1-6 7-6t7 6q5 0 5 4.500T19 22z" fill="#a9c8f5"/><circle cx="18" cy="7" r="6.500" fill="#c42b1c"/><text x="16" y="11" font-size="10" fill="#fff" font-family="Noto Sans, sans-serif">1</text></svg><span>6°C&nbsp; Pochmurnie</span></button>
  <button class="tray" aria-label="Ukryte ikony"><svg width="12" height="8"><path d="M1 7l5-5 5 5" fill="none" stroke="#fff" stroke-width="1.300"/></svg></button>
  <button class="tray" aria-label="Kamera"><svg width="12" height="16" fill="none" stroke="#fff"><path d="M1.500 4.500h7v7h-7zM9 7l2.500-2v6L9 9M2 2q3-2.500 6 0M2 14q3 2.500 6 0"/></svg></button>
  <button class="tray" aria-label="Powiadomienie aplikacji"><svg width="18" height="16" fill="none" stroke="#fff"><path d="M11 1.500H1.500v13H9M4 5h5L7 8h-3v4M10 1.500l5-1V9"/><circle cx="13" cy="12" r="4" fill="#e81123" stroke="none"/></svg></button>
  <button class="tray" aria-label="Bateria"><svg width="17" height="12" fill="none" stroke="#fff"><path d="M5.500 3.500h9v7h-9zM16 5v4M1.500 0v3M4.500 0v3M0 3.500h5.500M3 4v5"/><path d="M7 5h6v4H7z" fill="#fff" stroke="none"/></svg></button>
  <button class="tray" aria-label="Sieć"><svg width="17" height="15" fill="none" stroke="#fff"><path d="M5 2.500h10.500v8H4.500V7M8 13.500h6M11 11v2M.5 1.500h4v4h-4zM2.500 6v7"/></svg></button>
  <button class="tray" aria-label="Głośność"><svg width="17" height="16"><path d="M1 6h2l4-4v12l-4-4H1z" fill="none" stroke="#fff"/><circle cx="12" cy="11" r="4.500" fill="#e81123"/><path d="M10 9l4 4M14 9l-4 4" stroke="#fff"/></svg></button>
  <div class="clock">16:17<br>22.10.2026</div>
  <button class="note" aria-label="Powiadomienia"><svg width="26" height="26"><path d="M2 3h17v13H9l-4 4v-4H2z" fill="#fff"/><path d="M5 7h11M5 10h11M5 13h7" stroke="#04080c"/><circle cx="17" cy="18" r="7.500" fill="#333" stroke="#888"/><text x="14" y="22" font-size="11" fill="#fff" font-family="Noto Sans, sans-serif">2</text></svg></button>
</footer>
</body>
</html>
